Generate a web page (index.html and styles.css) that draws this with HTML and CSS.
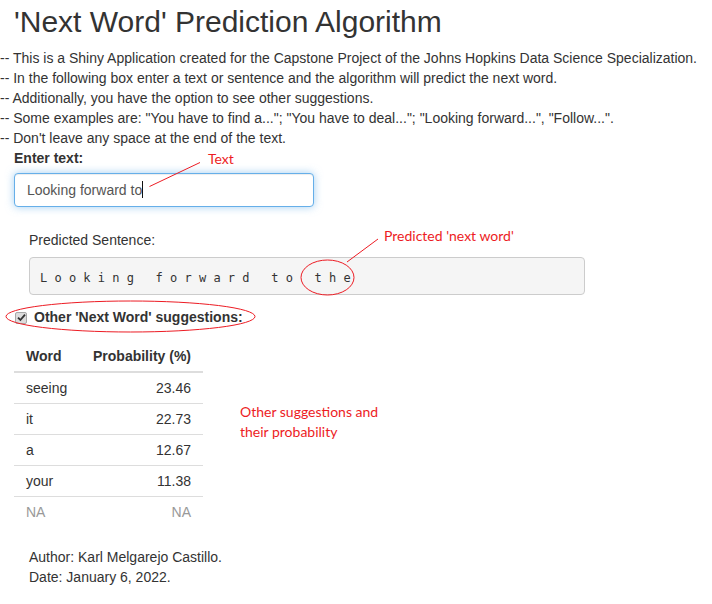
FILE: index.html
```html
<!DOCTYPE html>
<html lang="en">
<head>
<meta charset="utf-8">
<title>'Next Word' Prediction Algorithm</title>
<link rel="stylesheet" href="styles.css">
</head>
<body>
<div class="page">
  <h2 class="title">'Next Word' Prediction Algorithm</h2>
  <div class="intro">
    <div>-- This is a Shiny Application created for the Capstone Project of the Johns Hopkins Data Science Specialization.</div>
    <div>-- In the following box enter a text or sentence and the algorithm will predict the next word.</div>
    <div>-- Additionally, you have the option to see other suggestions.</div>
    <div>-- Some examples are: "You have to find a..."; "You have to deal..."; "Looking forward...", "Follow...".</div>
    <div>-- Don't leave any space at the end of the text.</div>
  </div>

  <div class="form-group">
    <label class="control-label" for="txt">Enter text:</label>
    <div class="input-wrap">
      <input id="txt" class="form-control" type="text" value="Looking forward to">
      <span class="caret-line"></span>
    </div>
  </div>

  <div class="prediction">
    <div class="pred-label">Predicted Sentence:</div>
    <pre class="pred-out">L o o k i n g   f o r w a r d   t o   t h e</pre>
  </div>

  <label class="checkbox">
    <span class="cb-box"><svg width="9" height="9" viewBox="0 0 9 9"><path d="M1 4.6 L3.4 7 L8 1.6" fill="none" stroke="#333" stroke-width="1.8"/></svg></span>
    <span class="cb-text">Other 'Next Word' suggestions:</span>
  </label>

  <table class="shiny-table">
    <thead>
      <tr><th class="col-word">Word</th><th class="col-prob">Probability (%)</th></tr>
    </thead>
    <tbody>
      <tr><td>seeing</td><td class="num">23.46</td></tr>
      <tr><td>it</td><td class="num">22.73</td></tr>
      <tr><td>a</td><td class="num">12.67</td></tr>
      <tr><td>your</td><td class="num">11.38</td></tr>
      <tr class="na"><td>NA</td><td class="num">NA</td></tr>
    </tbody>
  </table>

  <div class="footer">
    <div>Author: Karl Melgarejo Castillo.</div>
    <div>Date: January 6, 2022.</div>
  </div>

  <div class="note note-text">Text</div>
  <div class="note note-pred">Predicted 'next word'</div>
  <div class="note note-other">Other suggestions and<br>their probability</div>

  <svg class="marks" width="712" height="604" viewBox="0 0 712 604">
    <line x1="149.5" y1="186.5" x2="200" y2="162.5" />
    <ellipse cx="327.5" cy="277.5" rx="26.5" ry="17.5" />
    <line x1="347" y1="262" x2="378" y2="239" />
    <ellipse cx="130.5" cy="316.5" rx="124.5" ry="15.5" />
  </svg>
</div>
</body>
</html>
```

FILE: styles.css
```css
* { box-sizing: border-box; }

html, body {
  margin: 0;
  padding: 0;
  background: #fff;
}

body {
  font-family: "Liberation Sans", Arial, sans-serif;
  font-size: 14px;
  line-height: 20px;
  color: #333;
}

.page {
  position: relative;
  width: 712px;
  height: 604px;
  overflow: hidden;
}

.title {
  margin: 5px 0 10px 0;
  padding-left: 14px;
  font-size: 30px;
  line-height: 33px;
  font-weight: normal;
  color: #333;
}

.intro {
  margin: 0;
}

.form-group {
  padding-left: 14px;
  margin-bottom: 23px;
}

.control-label {
  display: block;
  font-weight: bold;
  margin-bottom: 5px;
}

.input-wrap {
  position: relative;
  width: 300px;
}

.form-control {
  display: block;
  width: 300px;
  height: 34px;
  padding: 6px 12px;
  font-family: "Liberation Sans", Arial, sans-serif;
  font-size: 14px;
  line-height: 20px;
  color: #555;
  background: #fff;
  border: 1px solid #66afe9;
  border-radius: 4px;
  outline: 0;
  box-shadow: inset 0 1px 1px rgba(0,0,0,.075), 0 0 8px rgba(102,175,233,.6);
}

.caret-line {
  position: absolute;
  left: 128px;
  top: 8px;
  width: 1px;
  height: 17px;
  background: #111;
}

.prediction {
  padding-left: 29px;
}

.pred-label {
  margin-bottom: 7px;
}

.pred-out {
  width: 556px;
  margin: 0 0 12px 0;
  padding: 11px 10px 7px 10px;
  font-family: "DejaVu Sans Mono", "Liberation Mono", monospace;
  font-size: 12px;
  line-height: 18px;
  color: #333;
  background: #f5f5f5;
  border: 1px solid #ccc;
  border-radius: 4px;
  white-space: pre;
}

.checkbox {
  display: flex;
  align-items: center;
  gap: 7px;
  padding-left: 15px;
  height: 20px;
  font-weight: bold;
  margin-bottom: 14px;
}

.cb-box {
  display: flex;
  align-items: center;
  justify-content: center;
  width: 12px;
  height: 12px;
  margin-top: 1px;
  background: #dcdcdc;
  border: 1px solid #a8a8a8;
  border-radius: 2px;
}

.shiny-table {
  margin-left: 14px;
  border-collapse: collapse;
}

.shiny-table th,
.shiny-table td {
  padding: 5px 12px;
  line-height: 20px;
}

.col-word { width: 67px; }
.col-prob { width: 122px; }

.shiny-table th {
  font-weight: bold;
  border-bottom: 2px solid #ddd;
}

.shiny-table td {
  border-top: 1px solid #ddd;
}

.col-word { text-align: left; }
.col-prob { text-align: right; }
.num { text-align: right; }

.shiny-table tr.na td { color: #999; }

.footer {
  padding-left: 29px;
  margin-top: 20px;
}

.note {
  position: absolute;
  font-family: Lato, "Open Sans", sans-serif;
  font-size: 14px;
  line-height: 20px;
  color: #ed1c24;
}

.note-text { left: 208px; top: 149px; }
.note-pred { left: 384px; top: 226px; }
.note-other { left: 240px; top: 402px; }

.marks {
  position: absolute;
  left: 0;
  top: 0;
  pointer-events: none;
}

.marks line,
.marks ellipse {
  fill: none;
  stroke: #ed1c24;
  stroke-width: 1;
}
```
